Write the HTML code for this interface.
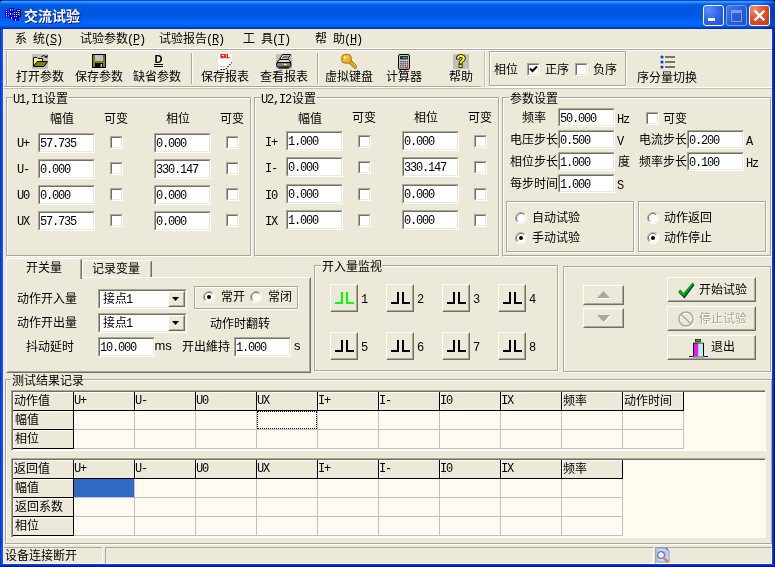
<!DOCTYPE html>
<html><head><meta charset="utf-8"><title>交流试验</title>
<style>
*{box-sizing:content-box;margin:0;padding:0}
html,body{width:775px;height:567px;overflow:hidden;background:#ECE9D8}
body{position:relative;font-family:"Liberation Sans","Noto Sans CJK SC",sans-serif;font-size:12px;line-height:18px;color:#000}
.ab,.t,.et,.ed,.bt,.gt,.r{position:absolute}
.t,.gt{white-space:nowrap;height:18px}
.a{font-family:"Liberation Mono","Noto Sans CJK SC",monospace;letter-spacing:-1.2px;margin-left:-1px;margin-right:1px}
.sp{display:inline-block;width:6px}
.et{border:1px solid #ACA899;box-shadow:1px 1px 0 #fff}
.et i{position:absolute;left:0;top:0;right:0;bottom:0;border-left:1px solid #fff;border-top:1px solid #fff}
.ed{background:#fff;overflow:hidden;border:1px solid;border-color:#ACA899 #fff #fff #ACA899}
.ed::before{content:"";position:absolute;left:0;top:0;right:0;bottom:0;border:1px solid;border-color:#716F64 #ECE9D8 #ECE9D8 #716F64}
.ed .v{position:absolute;left:2px;white-space:nowrap}
.bt{background:#ECE9D8;border:1px solid;border-color:#fff #716F64 #716F64 #fff}
.bt i{position:absolute;left:0;top:0;right:0;bottom:0;border:1px solid;border-color:#ECE9D8 #ACA899 #ACA899 #ECE9D8}
.gray{color:#ACA899;text-shadow:1px 1px 0 #fff}
.ss{font-family:"Liberation Sans",sans-serif;font-size:13px}
</style></head><body><div id="w" style="position:absolute;left:0;top:0;width:775px;height:567px;will-change:transform">

<div class="ab" style="left:0;top:0;width:775px;height:8px;background:#000"></div>
<div class="ab" style="left:0;top:8px;width:775px;height:559px;background:#0054E3"></div>
<div class="ab" style="left:3px;top:29px;width:769px;height:535px;background:#ECE9D8"></div>
<div class="ab" style="left:0;top:0;width:775px;height:29px;border-radius:4px 4px 0 0;background:linear-gradient(to bottom,#0047DC 0.5px,#3C96FF 1.5px,#2F8DFF 2.5px,#0B6EFA 3.5px,#0362EE 4.5px,#005CE6 5.5px,#0058E2 6.5px,#0058E2 7.5px,#0058E2 8.5px,#0058E2 9.5px,#0058E2 10.5px,#0058E2 11.5px,#0058E2 12.5px,#0058E2 13.5px,#0058E2 14.5px,#0058E2 15.5px,#0059E6 16.5px,#005AEA 17.5px,#005CEE 18.5px,#005EF2 19.5px,#0060F6 20.5px,#0264FC 21.5px,#0268FF 22.5px,#0268FF 23.5px,#0268FF 24.5px,#0062F4 25.5px,#0058E4 26.5px,#0044CC 27.5px,#0030B4 28.5px)"></div>
<div class="ab" style="left:760px;top:1px;width:15px;height:28px;background:linear-gradient(to right,rgba(0,20,120,0),rgba(0,20,120,.45))"></div>
<div class="t" style="left:24px;top:6px;font-size:14px;font-weight:bold;color:#fff;text-shadow:1px 1px 0 #0A1883;line-height:20px;height:20px">交流试验</div>
<svg class="ab" style="left:5px;top:8px" width="16" height="14" viewBox="0 0 16 14"><rect x="11" y="1" width="5" height="8" fill="#0000C8"/><rect x="15" y="1" width="1" height="8" fill="#000"/><rect x="12" y="2" width="3" height="1" fill="#A0A080"/><rect x="13" y="4" width="1" height="1" fill="#E0E000"/><rect x="13" y="6" width="1" height="1" fill="#E0E000"/><rect x="14" y="4" width="1" height="4" fill="#208080"/><rect x="0" y="2" width="4.5" height="7.5" fill="#0000FF"/><rect x="4" y="0" width="4.6" height="11" fill="#0000FF"/><rect x="8" y="0" width=".7" height="3" fill="#000060"/><rect x="8" y="3" width="5" height="10" fill="#0000FF"/><rect x="13" y="9" width="1" height="4" fill="#000"/><g fill="#FFFF00"><rect x="1" y="3" width="1" height="1"/><rect x="1" y="5" width="1" height="1"/><rect x="1" y="7" width="1" height="1.6"/><rect x="5" y="1" width="1" height="1.8"/><rect x="5" y="5" width="1" height="1.8"/><rect x="6" y="9" width="1" height="1.8"/><rect x="9" y="4" width="1" height="1"/><rect x="11" y="4" width="1" height="1"/><rect x="9" y="6" width="1" height="1"/><rect x="11" y="6" width="1" height="1"/><rect x="9" y="8" width="1" height="1"/><rect x="11" y="8" width="1" height="1"/><rect x="10" y="11" width="1" height="1.8"/></g><g fill="#909060"><rect x="3" y="3" width="1" height="1"/><rect x="3" y="5" width="1" height="1"/><rect x="3" y="7" width="1" height="1.6"/><rect x="7" y="1" width="1" height="1.8"/><rect x="7" y="5" width="1" height="1.8"/></g></svg>
<div class="ab" style="left:703px;top:5px;width:19px;height:19px;border:1px solid #fff;border-radius:3px;background:radial-gradient(circle at 25% 20%,#6090FA 0%,#2E64EC 50%,#2050D8 100%)"><div class="ab" style="left:4px;top:12px;width:7px;height:3px;background:#fff"></div></div>
<div class="ab" style="left:726px;top:5px;width:19px;height:19px;border:1px solid #7C9CE8;border-radius:3px;background:linear-gradient(135deg,#4A7DE8 0%,#2A5CD8 50%,#2453CC 100%)"><div class="ab" style="left:4px;top:4px;width:9px;height:8px;border:1px solid #7C9CE8;border-top:3px solid #7C9CE8"></div></div>
<div class="ab" style="left:749px;top:5px;width:19px;height:19px;border:1px solid #fff;border-radius:3px;background:radial-gradient(circle at 25% 20%,#F09478 0%,#E4532E 40%,#C63616 100%)"><svg class="ab" style="left:0;top:0" width="19" height="19" viewBox="0 0 19 19"><path d="M4.6 4.6 L14.4 14.4 M14.4 4.6 L4.6 14.4" stroke="#fff" stroke-width="2.4" stroke-linecap="butt"/></svg></div>
<div class="t" style="left:15px;top:30px">系<span class="sp"> </span>统<span class="a">(<u>S</u>)</span></div>
<div class="t" style="left:80px;top:30px">试验参数<span class="a">(<u>P</u>)</span></div>
<div class="t" style="left:159px;top:30px">试验报告<span class="a">(<u>R</u>)</span></div>
<div class="t" style="left:243px;top:30px">工<span class="sp"> </span>具<span class="a">(<u>T</u>)</span></div>
<div class="t" style="left:315px;top:30px">帮<span class="sp"> </span>助<span class="a">(<u>H</u>)</span></div>
<div class="ab" style="left:3px;top:48px;width:769px;height:1px;background:#fff"></div>
<div class="ab" style="left:3px;top:49px;width:769px;height:1px;background:#ACA899"></div>
<div class="ab" style="left:3px;top:50px;width:769px;height:1px;background:#fff"></div>
<div class="ab" style="left:3px;top:87px;width:769px;height:1px;background:#fff"></div>
<div class="ab" style="left:3px;top:88px;width:769px;height:1px;background:#C5C2B2"></div>
<div class="ab" style="left:6px;top:51px;width:1px;height:35px;background:#ACA899"></div>
<div class="ab" style="left:7px;top:51px;width:1px;height:35px;background:#fff"></div>
<svg class="ab" style="left:32px;top:54px" width="16" height="16" viewBox="0 0 16 16"><rect x="0" y="0" width="16" height="15" fill="#C0C0C0"/><path d="M1.5 12 V3.5 H5 L6 4.5 H10.5 V7.5" fill="#FFFF80" stroke="#000"/><path d="M2 11 L5 7 H10 V5 H6 L5 4 H2 Z" fill="#FFFF60"/><path d="M1.5 12.5 L5 7.5 H15.5 L12 12.5 Z" fill="#808000" stroke="#000"/><path d="M9.5 2.5 Q12 0 14.5 3.5" stroke="#000" fill="none"/><path d="M12.5 3.5 H15.5 V0.8 Z" fill="#000"/></svg>
<div class="t " style="left:16px;top:68px;">打开参数</div>
<svg class="ab" style="left:91px;top:54px" width="16" height="16" viewBox="0 0 16 16"><rect x="1.5" y="0.5" width="13" height="13" fill="#808000" stroke="#000"/><rect x="4" y="1" width="8" height="6" fill="#C0C0C0"/><rect x="4" y="9" width="8" height="5" fill="#000"/><rect x="9.5" y="10" width="1.5" height="3" fill="#C0C0C0"/><rect x="12.5" y="1.5" width="1" height="1" fill="#000"/></svg>
<div class="t " style="left:75px;top:68px;">保存参数</div>
<svg class="ab" style="left:149px;top:54px" width="16" height="16" viewBox="0 0 16 16"><text x="9.5" y="9.4" font-family="Liberation Sans,sans-serif" font-weight="bold" font-size="11" text-anchor="middle" fill="#000">D</text><rect x="5" y="10" width="9" height="1" fill="#000"/><rect x="5" y="12" width="9" height="1" fill="#000"/></svg>
<div class="t " style="left:133px;top:68px;">缺省参数</div>
<svg class="ab" style="left:217px;top:54px" width="16" height="16" viewBox="0 0 16 16"><path d="M2 0 H16 V8 Q15.5 12 10 16 H1 V1 Z" fill="#fff"/><path d="M14.5 0 H16 V8 L14.5 10 Z" fill="#E8E8E8"/><text x="8" y="4.2" font-size="4.6" font-family="Liberation Sans,sans-serif" font-weight="bold" fill="#F00000" text-anchor="middle" stroke="#F00000" stroke-width=".4">EXL</text><path d="M3.5 15.5 H8.5 L14.8 8.5" stroke="#000" stroke-width="1.1" stroke-dasharray="1.6 1.1" fill="none"/><path d="M3 12.5 H9" stroke="#C8C8C8"/></svg>
<div class="t " style="left:201px;top:68px;">保存报表</div>
<svg class="ab" style="left:276px;top:54px" width="16" height="16" viewBox="0 0 16 16"><rect x="0" y="0" width="16" height="15" fill="#C0C0C0"/><path d="M6.5 0.5 H14.5 L11.5 5.5 H3.5 Z" fill="#fff" stroke="#000"/><path d="M7 2.2 H12.5 M6 3.8 H11.5" stroke="#000" stroke-width=".8"/><path d="M1 8.5 L3.5 5.5 H12.5 L15 8.5 Z" fill="#D8D8D8" stroke="#000"/><rect x="0.5" y="8.5" width="14.5" height="4.5" rx="1.8" fill="#808080" stroke="#000"/><rect x="7.5" y="10" width="3.5" height="1" fill="#FFFF00"/><path d="M2.5 14 H13" stroke="#000" stroke-width="1.2"/></svg>
<div class="t " style="left:260px;top:68px;">查看报表</div>
<svg class="ab" style="left:341px;top:54px" width="16" height="16" viewBox="0 0 16 16"><path d="M6.5 7.5 L9.5 5.5 L15.3 11.5 L15.3 14.3 L13 14.3 L12.6 12.8 L11.2 12.6 L10.8 11 L9.4 10.8 Z" fill="#E8A818" stroke="#A87008" stroke-width=".8"/><rect x="0.8" y="0.5" width="9.4" height="8.6" rx="3" fill="#F0B828" stroke="#A87008"/><circle cx="4" cy="3.5" r="1.3" fill="#FFF4C0"/><path d="M2.5 6.5 L7.5 2" stroke="#F8D060" stroke-width="1"/></svg>
<div class="t " style="left:325px;top:68px;">虚拟键盘</div>
<svg class="ab" style="left:396px;top:54px" width="16" height="16" viewBox="0 0 16 16"><rect x="2.5" y="0.5" width="11" height="15" rx="1.5" fill="#C8C8C8" stroke="#000"/><rect x="4" y="2" width="8" height="3.5" fill="#303030"/><rect x="7.2" y="3" width="1.4" height="1.4" fill="#00E8E8"/><rect x="9.6" y="3" width="1.4" height="1.4" fill="#00E8E8"/><g fill="#404040"><rect x="4.2" y="7" width="1.3" height="1.3"/><rect x="6.4" y="7" width="1.3" height="1.3"/><rect x="8.6" y="7" width="1.3" height="1.3"/><rect x="10.8" y="7" width="1.3" height="1.3"/><rect x="4.2" y="9.1" width="1.3" height="1.3"/><rect x="6.4" y="9.1" width="1.3" height="1.3"/><rect x="8.6" y="9.1" width="1.3" height="1.3"/><rect x="10.8" y="9.1" width="1.3" height="1.3"/><rect x="4.2" y="11.2" width="1.3" height="1.3"/><rect x="6.4" y="11.2" width="1.3" height="1.3"/><rect x="8.6" y="11.2" width="1.3" height="1.3"/><rect x="10.8" y="11.2" width="1.3" height="1.3"/><rect x="4.2" y="13.2" width="1.3" height="1.3"/><rect x="6.4" y="13.2" width="1.3" height="1.3"/></g><rect x="8.6" y="13" width="3.5" height="1.4" fill="#F02020"/></svg>
<div class="t " style="left:386px;top:68px;">计算器</div>
<svg class="ab" style="left:453px;top:54px" width="16" height="16" viewBox="0 0 16 16"><rect x="0" y="0" width="16" height="15" fill="#C0C0C0"/><text x="8" y="13" font-family="Liberation Sans,sans-serif" font-weight="bold" font-size="16" text-anchor="middle" fill="#FFFF00" stroke="#000" stroke-width="1.6" paint-order="stroke">?</text></svg>
<div class="t " style="left:449px;top:68px;">帮助</div>
<div class="ab" style="left:191px;top:53px;width:1px;height:31px;background:#ACA899"></div>
<div class="ab" style="left:192px;top:53px;width:1px;height:31px;background:#fff"></div>
<div class="ab" style="left:317px;top:53px;width:1px;height:31px;background:#ACA899"></div>
<div class="ab" style="left:318px;top:53px;width:1px;height:31px;background:#fff"></div>
<div class="ab" style="left:484px;top:51px;width:1px;height:36px;background:#C5C2B2"></div>
<div class="ab" style="left:485px;top:51px;width:1px;height:36px;background:#fff"></div>
<div class="ab" style="left:3px;top:86px;width:478px;height:1px;background:#ACA899"></div>
<div class="et" style="left:489px;top:51px;width:135px;height:33px"><i></i></div>
<div class="t " style="left:494px;top:61px;">相位</div>
<div class="ed" style="left:527px;top:63px;width:11px;height:11px"><svg width="9" height="9" viewBox="0 0 9 9" style="position:absolute;left:1px;top:1px"><path d="M1 3.5 L3.5 6 L8 1.5" stroke="#000" stroke-width="2" fill="none"/></svg></div>
<div class="t " style="left:545px;top:61px;">正序</div>
<div class="ed" style="left:575px;top:63px;width:11px;height:11px"></div>
<div class="t " style="left:593px;top:61px;">负序</div>
<svg class="ab" style="left:660px;top:55px" width="16" height="14" viewBox="0 0 16 14"><g fill="#1040C0"><circle cx="2" cy="2" r="1.6"/><circle cx="2" cy="7" r="1.6"/><circle cx="2" cy="12" r="1.6"/></g><g fill="#000"><rect x="5" y="1.5" width="10" height="1"/><rect x="5" y="6.5" width="10" height="1"/><rect x="5" y="11.5" width="10" height="1"/></g></svg>
<div class="t " style="left:637px;top:69px;">序分量切换</div>
<div class="et" style="left:6px;top:97px;width:243px;height:157px"><i></i></div>
<div class="ab" style="left:13px;top:97px;width:55px;height:2px;background:#ECE9D8"></div>
<div class="t" style="left:14px;top:90px"><span class="a">U1,I1</span>设置</div>
<div class="t " style="left:50px;top:110px;">幅值</div>
<div class="t " style="left:104px;top:110px;">可变</div>
<div class="t " style="left:166px;top:110px;">相位</div>
<div class="t " style="left:220px;top:110px;">可变</div>
<div class="t " style="left:18px;top:134px;"><span class="a">U+</span></div>
<div class="ed" style="left:38px;top:133px;width:55px;height:18px"><span class="a v" style="top:1px">57.735</span></div>
<div class="ed" style="left:110px;top:136px;width:11px;height:11px"></div>
<div class="ed" style="left:154px;top:133px;width:55px;height:18px"><span class="a v" style="top:1px">0.000</span></div>
<div class="ed" style="left:226px;top:136px;width:11px;height:11px"></div>
<div class="t " style="left:18px;top:160px;"><span class="a">U-</span></div>
<div class="ed" style="left:38px;top:159px;width:55px;height:18px"><span class="a v" style="top:1px">0.000</span></div>
<div class="ed" style="left:110px;top:162px;width:11px;height:11px"></div>
<div class="ed" style="left:154px;top:159px;width:55px;height:18px"><span class="a v" style="top:1px">330.147</span></div>
<div class="ed" style="left:226px;top:162px;width:11px;height:11px"></div>
<div class="t " style="left:18px;top:186px;"><span class="a">U0</span></div>
<div class="ed" style="left:38px;top:185px;width:55px;height:18px"><span class="a v" style="top:1px">0.000</span></div>
<div class="ed" style="left:110px;top:188px;width:11px;height:11px"></div>
<div class="ed" style="left:154px;top:185px;width:55px;height:18px"><span class="a v" style="top:1px">0.000</span></div>
<div class="ed" style="left:226px;top:188px;width:11px;height:11px"></div>
<div class="t " style="left:18px;top:212px;"><span class="a">UX</span></div>
<div class="ed" style="left:38px;top:211px;width:55px;height:18px"><span class="a v" style="top:1px">57.735</span></div>
<div class="ed" style="left:110px;top:214px;width:11px;height:11px"></div>
<div class="ed" style="left:154px;top:211px;width:55px;height:18px"><span class="a v" style="top:1px">0.000</span></div>
<div class="ed" style="left:226px;top:214px;width:11px;height:11px"></div>
<div class="et" style="left:254px;top:97px;width:243px;height:157px"><i></i></div>
<div class="ab" style="left:261px;top:97px;width:55px;height:2px;background:#ECE9D8"></div>
<div class="t" style="left:262px;top:90px"><span class="a">U2,I2</span>设置</div>
<div class="t " style="left:298px;top:110px;">幅值</div>
<div class="t " style="left:352px;top:109px;">可变</div>
<div class="t " style="left:414px;top:109px;">相位</div>
<div class="t " style="left:468px;top:109px;">可变</div>
<div class="t " style="left:266px;top:133px;"><span class="a">I+</span></div>
<div class="ed" style="left:286px;top:131px;width:55px;height:18px"><span class="a v" style="top:1px">1.000</span></div>
<div class="ed" style="left:358px;top:135px;width:11px;height:11px"></div>
<div class="ed" style="left:402px;top:131px;width:55px;height:18px"><span class="a v" style="top:1px">0.000</span></div>
<div class="ed" style="left:474px;top:135px;width:11px;height:11px"></div>
<div class="t " style="left:266px;top:159px;"><span class="a">I-</span></div>
<div class="ed" style="left:286px;top:157px;width:55px;height:18px"><span class="a v" style="top:1px">0.000</span></div>
<div class="ed" style="left:358px;top:161px;width:11px;height:11px"></div>
<div class="ed" style="left:402px;top:157px;width:55px;height:18px"><span class="a v" style="top:1px">330.147</span></div>
<div class="ed" style="left:474px;top:161px;width:11px;height:11px"></div>
<div class="t " style="left:266px;top:186px;"><span class="a">I0</span></div>
<div class="ed" style="left:286px;top:184px;width:55px;height:18px"><span class="a v" style="top:1px">0.000</span></div>
<div class="ed" style="left:358px;top:188px;width:11px;height:11px"></div>
<div class="ed" style="left:402px;top:184px;width:55px;height:18px"><span class="a v" style="top:1px">0.000</span></div>
<div class="ed" style="left:474px;top:188px;width:11px;height:11px"></div>
<div class="t " style="left:266px;top:212px;"><span class="a">IX</span></div>
<div class="ed" style="left:286px;top:210px;width:55px;height:18px"><span class="a v" style="top:1px">1.000</span></div>
<div class="ed" style="left:358px;top:214px;width:11px;height:11px"></div>
<div class="ed" style="left:402px;top:210px;width:55px;height:18px"><span class="a v" style="top:1px">0.000</span></div>
<div class="ed" style="left:474px;top:214px;width:11px;height:11px"></div>
<div class="et" style="left:502px;top:97px;width:267px;height:157px"><i></i></div>
<div class="ab" style="left:509px;top:97px;width:49px;height:2px;background:#ECE9D8"></div>
<div class="t" style="left:510px;top:90px">参数设置</div>
<div class="t " style="left:522px;top:109px;">频率</div>
<div class="ed" style="left:558px;top:108px;width:55px;height:17px"><span class="a v" style="top:1px">50.000</span></div>
<div class="t " style="left:618px;top:110px;"><span class="a">Hz</span></div>
<div class="ed" style="left:646px;top:112px;width:11px;height:11px"></div>
<div class="t " style="left:663px;top:110px;">可变</div>
<div class="t " style="left:510px;top:131px;">电压步长</div>
<div class="ed" style="left:558px;top:130px;width:55px;height:17px"><span class="a v" style="top:1px">0.500</span></div>
<div class="t " style="left:618px;top:132px;"><span class="a">V</span></div>
<div class="t " style="left:639px;top:131px;">电流步长</div>
<div class="ed" style="left:687px;top:130px;width:55px;height:17px"><span class="a v" style="top:1px">0.200</span></div>
<div class="t " style="left:747px;top:132px;"><span class="a">A</span></div>
<div class="t " style="left:510px;top:153px;">相位步长</div>
<div class="ed" style="left:558px;top:152px;width:55px;height:17px"><span class="a v" style="top:1px">1.000</span></div>
<div class="t " style="left:618px;top:153px;">度</div>
<div class="t " style="left:639px;top:153px;">频率步长</div>
<div class="ed" style="left:687px;top:152px;width:55px;height:17px"><span class="a v" style="top:1px">0.100</span></div>
<div class="t " style="left:747px;top:154px;"><span class="a">Hz</span></div>
<div class="t " style="left:510px;top:175px;">每步时间</div>
<div class="ed" style="left:558px;top:174px;width:55px;height:17px"><span class="a v" style="top:1px">1.000</span></div>
<div class="t " style="left:618px;top:176px;"><span class="a">S</span></div>
<div class="et" style="left:506px;top:201px;width:126px;height:49px"><i></i></div>
<div class="et" style="left:638px;top:201px;width:126px;height:49px"><i></i></div>
<svg class="ab" style="left:515px;top:212px" width="12" height="12" viewBox="0 0 12 12"><circle cx="6" cy="6" r="5.5" fill="#fff"/><path d="M9.9 2.1 A5.5 5.5 0 0 0 2.1 9.9" stroke="#ACA899" stroke-width="1" fill="none"/><path d="M9.2 2.8 A4.5 4.5 0 0 0 2.8 9.2" stroke="#716F64" stroke-width="1" fill="none"/><path d="M2.1 9.9 A5.5 5.5 0 0 0 9.9 2.1" stroke="#fff" stroke-width="1" fill="none"/><path d="M2.8 9.2 A4.5 4.5 0 0 0 9.2 2.8" stroke="#F1EFE2" stroke-width="1" fill="none"/></svg>
<div class="t " style="left:532px;top:209px;">自动试验</div>
<svg class="ab" style="left:515px;top:232px" width="12" height="12" viewBox="0 0 12 12"><circle cx="6" cy="6" r="5.5" fill="#fff"/><path d="M9.9 2.1 A5.5 5.5 0 0 0 2.1 9.9" stroke="#ACA899" stroke-width="1" fill="none"/><path d="M9.2 2.8 A4.5 4.5 0 0 0 2.8 9.2" stroke="#716F64" stroke-width="1" fill="none"/><path d="M2.1 9.9 A5.5 5.5 0 0 0 9.9 2.1" stroke="#fff" stroke-width="1" fill="none"/><path d="M2.8 9.2 A4.5 4.5 0 0 0 9.2 2.8" stroke="#F1EFE2" stroke-width="1" fill="none"/><circle cx="6" cy="6" r="2" fill="#000"/></svg>
<div class="t " style="left:532px;top:229px;">手动试验</div>
<svg class="ab" style="left:647px;top:212px" width="12" height="12" viewBox="0 0 12 12"><circle cx="6" cy="6" r="5.5" fill="#fff"/><path d="M9.9 2.1 A5.5 5.5 0 0 0 2.1 9.9" stroke="#ACA899" stroke-width="1" fill="none"/><path d="M9.2 2.8 A4.5 4.5 0 0 0 2.8 9.2" stroke="#716F64" stroke-width="1" fill="none"/><path d="M2.1 9.9 A5.5 5.5 0 0 0 9.9 2.1" stroke="#fff" stroke-width="1" fill="none"/><path d="M2.8 9.2 A4.5 4.5 0 0 0 9.2 2.8" stroke="#F1EFE2" stroke-width="1" fill="none"/></svg>
<div class="t " style="left:664px;top:209px;">动作返回</div>
<svg class="ab" style="left:647px;top:232px" width="12" height="12" viewBox="0 0 12 12"><circle cx="6" cy="6" r="5.5" fill="#fff"/><path d="M9.9 2.1 A5.5 5.5 0 0 0 2.1 9.9" stroke="#ACA899" stroke-width="1" fill="none"/><path d="M9.2 2.8 A4.5 4.5 0 0 0 2.8 9.2" stroke="#716F64" stroke-width="1" fill="none"/><path d="M2.1 9.9 A5.5 5.5 0 0 0 9.9 2.1" stroke="#fff" stroke-width="1" fill="none"/><path d="M2.8 9.2 A4.5 4.5 0 0 0 9.2 2.8" stroke="#F1EFE2" stroke-width="1" fill="none"/><circle cx="6" cy="6" r="2" fill="#000"/></svg>
<div class="t " style="left:664px;top:229px;">动作停止</div>
<div class="ab" style="left:6px;top:277px;width:303px;height:94px;border:1px solid;border-color:#fff #716F64 #716F64 #fff;background:#ECE9D8"><div class="ab" style="left:0;top:0;right:0;bottom:0;border:1px solid;border-color:#ECE9D8 #ACA899 #ACA899 #ECE9D8"></div></div>
<div class="ab" style="left:6px;top:258px;width:74px;height:20px;background:#ECE9D8;border:1px solid;border-color:#fff #716F64 #ECE9D8 #fff;border-bottom:none;border-radius:3px 3px 0 0"><div class="ab" style="right:0;top:1px;width:1px;height:19px;background:#ACA899"></div></div>
<div class="ab" style="left:82px;top:260px;width:68px;height:16px;background:#ECE9D8;border:1px solid;border-color:#fff #716F64 #fff #fff;border-bottom:none;border-radius:2px 2px 0 0"><div class="ab" style="right:0;top:1px;width:1px;height:15px;background:#ACA899"></div></div>
<div class="t " style="left:26px;top:259px;">开关量</div>
<div class="t " style="left:92px;top:260px;">记录变量</div>
<div class="t " style="left:17px;top:290px;">动作开入量</div>
<div class="t " style="left:17px;top:314px;">动作开出量</div>
<div class="t " style="left:26px;top:338px;">抖动延时</div>
<div class="ed" style="left:98px;top:289px;width:87px;height:18px"><span class="ab" style="left:4px;top:0px;white-space:nowrap;z-index:1">接点<span class="a">1</span></span><div class="bt" style="right:1px;top:1px;width:15px;height:14px;z-index:1"><i></i><svg class="ab" style="left:3px;top:5px" width="7" height="4" viewBox="0 0 7 4"><path d="M0 0 H7 L3.5 4 Z" fill="#000"/></svg></div></div>
<div class="ed" style="left:98px;top:313px;width:87px;height:18px"><span class="ab" style="left:4px;top:0px;white-space:nowrap;z-index:1">接点<span class="a">1</span></span><div class="bt" style="right:1px;top:1px;width:15px;height:14px;z-index:1"><i></i><svg class="ab" style="left:3px;top:5px" width="7" height="4" viewBox="0 0 7 4"><path d="M0 0 H7 L3.5 4 Z" fill="#000"/></svg></div></div>
<div class="ed" style="left:98px;top:337px;width:55px;height:18px"><span class="a v" style="top:1px">10.000</span></div>
<div class="t ss" style="left:154.5px;top:337px">ms</div>
<div class="t " style="left:182px;top:338px;">开出維持</div>
<div class="ed" style="left:234px;top:337px;width:55px;height:18px"><span class="a v" style="top:1px">1.000</span></div>
<div class="t ss" style="left:294px;top:337px">s</div>
<div class="et" style="left:194px;top:286px;width:102px;height:21px"><i></i></div>
<svg class="ab" style="left:203px;top:291px" width="12" height="12" viewBox="0 0 12 12"><circle cx="6" cy="6" r="5.5" fill="#fff"/><path d="M9.9 2.1 A5.5 5.5 0 0 0 2.1 9.9" stroke="#ACA899" stroke-width="1" fill="none"/><path d="M9.2 2.8 A4.5 4.5 0 0 0 2.8 9.2" stroke="#716F64" stroke-width="1" fill="none"/><path d="M2.1 9.9 A5.5 5.5 0 0 0 9.9 2.1" stroke="#fff" stroke-width="1" fill="none"/><path d="M2.8 9.2 A4.5 4.5 0 0 0 9.2 2.8" stroke="#F1EFE2" stroke-width="1" fill="none"/><circle cx="6" cy="6" r="2" fill="#000"/></svg>
<div class="t " style="left:221px;top:288px;">常开</div>
<svg class="ab" style="left:250px;top:291px" width="12" height="12" viewBox="0 0 12 12"><circle cx="6" cy="6" r="5.5" fill="#fff"/><path d="M9.9 2.1 A5.5 5.5 0 0 0 2.1 9.9" stroke="#ACA899" stroke-width="1" fill="none"/><path d="M9.2 2.8 A4.5 4.5 0 0 0 2.8 9.2" stroke="#716F64" stroke-width="1" fill="none"/><path d="M2.1 9.9 A5.5 5.5 0 0 0 9.9 2.1" stroke="#fff" stroke-width="1" fill="none"/><path d="M2.8 9.2 A4.5 4.5 0 0 0 9.2 2.8" stroke="#F1EFE2" stroke-width="1" fill="none"/></svg>
<div class="t " style="left:268px;top:288px;">常闭</div>
<div class="t " style="left:210px;top:315px;">动作时翻转</div>
<div class="et" style="left:314px;top:265px;width:242px;height:104px"><i></i></div>
<div class="ab" style="left:321px;top:265px;width:61px;height:2px;background:#ECE9D8"></div>
<div class="t" style="left:322px;top:258px">开入量监视</div>
<div class="bt" style="left:330px;top:284px;width:26px;height:26px"><i></i><svg class="ab" style="left:4px;top:7px" width="19" height="12" viewBox="0 0 19 12"><path d="M0 10 H6 V0 H8 V12 H0 Z M11 0 H13 V10 H19 V12 H11 Z" fill="#00FF00"/></svg></div>
<div class="t " style="left:362px;top:290px;"><span class="a">1</span></div>
<div class="bt" style="left:386px;top:284px;width:26px;height:26px"><i></i><svg class="ab" style="left:4px;top:7px" width="19" height="12" viewBox="0 0 19 12"><path d="M0 10 H6 V0 H8 V12 H0 Z M11 0 H13 V10 H19 V12 H11 Z" fill="#000"/></svg></div>
<div class="t " style="left:418px;top:290px;"><span class="a">2</span></div>
<div class="bt" style="left:442px;top:284px;width:26px;height:26px"><i></i><svg class="ab" style="left:4px;top:7px" width="19" height="12" viewBox="0 0 19 12"><path d="M0 10 H6 V0 H8 V12 H0 Z M11 0 H13 V10 H19 V12 H11 Z" fill="#000"/></svg></div>
<div class="t " style="left:474px;top:290px;"><span class="a">3</span></div>
<div class="bt" style="left:498px;top:284px;width:26px;height:26px"><i></i><svg class="ab" style="left:4px;top:7px" width="19" height="12" viewBox="0 0 19 12"><path d="M0 10 H6 V0 H8 V12 H0 Z M11 0 H13 V10 H19 V12 H11 Z" fill="#000"/></svg></div>
<div class="t " style="left:530px;top:290px;"><span class="a">4</span></div>
<div class="bt" style="left:330px;top:332px;width:26px;height:26px"><i></i><svg class="ab" style="left:4px;top:7px" width="19" height="12" viewBox="0 0 19 12"><path d="M0 10 H6 V0 H8 V12 H0 Z M11 0 H13 V10 H19 V12 H11 Z" fill="#000"/></svg></div>
<div class="t " style="left:362px;top:338px;"><span class="a">5</span></div>
<div class="bt" style="left:386px;top:332px;width:26px;height:26px"><i></i><svg class="ab" style="left:4px;top:7px" width="19" height="12" viewBox="0 0 19 12"><path d="M0 10 H6 V0 H8 V12 H0 Z M11 0 H13 V10 H19 V12 H11 Z" fill="#000"/></svg></div>
<div class="t " style="left:418px;top:338px;"><span class="a">6</span></div>
<div class="bt" style="left:442px;top:332px;width:26px;height:26px"><i></i><svg class="ab" style="left:4px;top:7px" width="19" height="12" viewBox="0 0 19 12"><path d="M0 10 H6 V0 H8 V12 H0 Z M11 0 H13 V10 H19 V12 H11 Z" fill="#000"/></svg></div>
<div class="t " style="left:474px;top:338px;"><span class="a">7</span></div>
<div class="bt" style="left:498px;top:332px;width:26px;height:26px"><i></i><svg class="ab" style="left:4px;top:7px" width="19" height="12" viewBox="0 0 19 12"><path d="M0 10 H6 V0 H8 V12 H0 Z M11 0 H13 V10 H19 V12 H11 Z" fill="#000"/></svg></div>
<div class="t " style="left:530px;top:338px;"><span class="a">8</span></div>
<div class="et" style="left:563px;top:266px;width:206px;height:104px"><i></i></div>
<div class="bt" style="left:583px;top:285px;width:39px;height:18px"><i></i><svg class="ab" style="left:13px;top:5px" width="14" height="8" viewBox="0 0 14 8"><path d="M1 8 H14 L7.5 1 Z" fill="#fff"/><path d="M0 7 H13 L6.5 0 Z" fill="#ACA899"/></svg></div>
<div class="bt" style="left:583px;top:308px;width:39px;height:18px"><i></i><svg class="ab" style="left:13px;top:6px" width="14" height="8" viewBox="0 0 14 8"><path d="M1 1 H14 L7.5 8 Z" fill="#fff"/><path d="M0 0 H13 L6.5 7 Z" fill="#ACA899"/></svg></div>
<div class="bt" style="left:667px;top:277px;width:87px;height:23px"><i></i><svg class="ab" style="left:9px;top:4px" width="18" height="17" viewBox="0 0 18 17"><path d="M1.5 10.5 L4 8.5 L7 12 L15.5 1.5 L17.5 3 L7.5 16.5 Z" fill="#102080"/><path d="M1 9.5 L3.5 7.5 L6.5 11 L15.5 0.5 L17 1.5 L7 15 Z" fill="#00A800"/></svg></div>
<div class="t " style="left:699px;top:281px;">开始试验</div>
<div class="bt" style="left:667px;top:306px;width:87px;height:23px"><i></i><svg class="ab" style="left:10px;top:4px" width="18" height="18" viewBox="0 0 18 18"><circle cx="9" cy="9" r="7" fill="none" stroke="#fff" stroke-width="1.5"/><path d="M4.5 4.5 L14.5 14.5" stroke="#fff" stroke-width="1.5"/><circle cx="8" cy="8" r="7" fill="none" stroke="#ACA899" stroke-width="1.5"/><path d="M3.2 3.2 L12.8 12.8" stroke="#ACA899" stroke-width="1.5"/></svg></div>
<div class="t gray" style="left:699px;top:310px;">停止试验</div>
<div class="bt" style="left:667px;top:335px;width:87px;height:23px"><i></i><svg class="ab" style="left:21px;top:3px" width="20" height="20" viewBox="0 0 20 20"><rect x="6.5" y="0.5" width="5" height="2" fill="#00D000" stroke="#000" stroke-width=".7"/><rect x="5" y="4" width="4.5" height="13.5" fill="#E818E8"/><rect x="9.5" y="4" width="5" height="13.5" fill="#B0F4F4"/><path d="M4.5 4 V17.5 M14.5 4 V17.5" stroke="#000"/><path d="M4.5 4 H14.5" stroke="#000" stroke-width=".8"/><path d="M0 17.5 H4 M15 17.5 H19" stroke="#0000A0" stroke-width="1.2"/><path d="M4 18 H15" stroke="#606060"/></svg></div>
<div class="t " style="left:711px;top:338px;">退出</div>
<div class="et" style="left:5px;top:379px;width:765px;height:163px"><i></i></div>
<div class="ab" style="left:11px;top:379px;width:73px;height:2px;background:#ECE9D8"></div>
<div class="t" style="left:12px;top:372px">测试结果记录</div>
<div class="ab" style="left:11px;top:390px;width:753px;height:59px;background:#FFFBF0;border:1px solid;border-color:#ACA899 #fff #fff #ACA899"></div>
<div class="ab" style="left:12px;top:391px;width:752px;height:58px;border-left:1px solid #716F64;border-top:1px solid #716F64"></div>
<div class="ab" style="left:74px;top:411px;width:60px;height:18px;border-right:1px solid #C0C0C0;border-bottom:1px solid #C0C0C0;background:transparent"></div>
<div class="ab" style="left:135px;top:411px;width:60px;height:18px;border-right:1px solid #C0C0C0;border-bottom:1px solid #C0C0C0;background:transparent"></div>
<div class="ab" style="left:196px;top:411px;width:60px;height:18px;border-right:1px solid #C0C0C0;border-bottom:1px solid #C0C0C0;background:transparent"></div>
<div class="ab" style="left:257px;top:411px;width:60px;height:18px;border-right:1px solid #C0C0C0;border-bottom:1px solid #C0C0C0;background:transparent"></div>
<div class="ab" style="left:257px;top:411px;width:58px;height:16px;border:1px dotted #000"></div>
<div class="ab" style="left:318px;top:411px;width:60px;height:18px;border-right:1px solid #C0C0C0;border-bottom:1px solid #C0C0C0;background:transparent"></div>
<div class="ab" style="left:379px;top:411px;width:60px;height:18px;border-right:1px solid #C0C0C0;border-bottom:1px solid #C0C0C0;background:transparent"></div>
<div class="ab" style="left:440px;top:411px;width:60px;height:18px;border-right:1px solid #C0C0C0;border-bottom:1px solid #C0C0C0;background:transparent"></div>
<div class="ab" style="left:501px;top:411px;width:60px;height:18px;border-right:1px solid #C0C0C0;border-bottom:1px solid #C0C0C0;background:transparent"></div>
<div class="ab" style="left:562px;top:411px;width:60px;height:18px;border-right:1px solid #C0C0C0;border-bottom:1px solid #C0C0C0;background:transparent"></div>
<div class="ab" style="left:623px;top:411px;width:60px;height:18px;border-right:1px solid #C0C0C0;border-bottom:1px solid #C0C0C0;background:transparent"></div>
<div class="ab" style="left:74px;top:430px;width:60px;height:18px;border-right:1px solid #C0C0C0;border-bottom:1px solid #C0C0C0;background:transparent"></div>
<div class="ab" style="left:135px;top:430px;width:60px;height:18px;border-right:1px solid #C0C0C0;border-bottom:1px solid #C0C0C0;background:transparent"></div>
<div class="ab" style="left:196px;top:430px;width:60px;height:18px;border-right:1px solid #C0C0C0;border-bottom:1px solid #C0C0C0;background:transparent"></div>
<div class="ab" style="left:257px;top:430px;width:60px;height:18px;border-right:1px solid #C0C0C0;border-bottom:1px solid #C0C0C0;background:transparent"></div>
<div class="ab" style="left:318px;top:430px;width:60px;height:18px;border-right:1px solid #C0C0C0;border-bottom:1px solid #C0C0C0;background:transparent"></div>
<div class="ab" style="left:379px;top:430px;width:60px;height:18px;border-right:1px solid #C0C0C0;border-bottom:1px solid #C0C0C0;background:transparent"></div>
<div class="ab" style="left:440px;top:430px;width:60px;height:18px;border-right:1px solid #C0C0C0;border-bottom:1px solid #C0C0C0;background:transparent"></div>
<div class="ab" style="left:501px;top:430px;width:60px;height:18px;border-right:1px solid #C0C0C0;border-bottom:1px solid #C0C0C0;background:transparent"></div>
<div class="ab" style="left:562px;top:430px;width:60px;height:18px;border-right:1px solid #C0C0C0;border-bottom:1px solid #C0C0C0;background:transparent"></div>
<div class="ab" style="left:623px;top:430px;width:60px;height:18px;border-right:1px solid #C0C0C0;border-bottom:1px solid #C0C0C0;background:transparent"></div>
<div class="ab" style="left:13px;top:392px;width:60px;height:18px;background:#ECE9D8;border-right:1px solid #000;border-bottom:1px solid #000;box-shadow:inset 1px 1px 0 #fff"></div>
<div class="t " style="left:14px;top:392px;">动作值</div>
<div class="ab" style="left:74px;top:392px;width:60px;height:18px;background:#ECE9D8;border-right:1px solid #000;border-bottom:1px solid #000;box-shadow:inset 1px 1px 0 #fff"></div>
<div class="t " style="left:75px;top:391px;"><span class="a">U+</span></div>
<div class="ab" style="left:135px;top:392px;width:60px;height:18px;background:#ECE9D8;border-right:1px solid #000;border-bottom:1px solid #000;box-shadow:inset 1px 1px 0 #fff"></div>
<div class="t " style="left:136px;top:391px;"><span class="a">U-</span></div>
<div class="ab" style="left:196px;top:392px;width:60px;height:18px;background:#ECE9D8;border-right:1px solid #000;border-bottom:1px solid #000;box-shadow:inset 1px 1px 0 #fff"></div>
<div class="t " style="left:197px;top:391px;"><span class="a">U0</span></div>
<div class="ab" style="left:257px;top:392px;width:60px;height:18px;background:#ECE9D8;border-right:1px solid #000;border-bottom:1px solid #000;box-shadow:inset 1px 1px 0 #fff"></div>
<div class="t " style="left:258px;top:391px;"><span class="a">UX</span></div>
<div class="ab" style="left:318px;top:392px;width:60px;height:18px;background:#ECE9D8;border-right:1px solid #000;border-bottom:1px solid #000;box-shadow:inset 1px 1px 0 #fff"></div>
<div class="t " style="left:319px;top:391px;"><span class="a">I+</span></div>
<div class="ab" style="left:379px;top:392px;width:60px;height:18px;background:#ECE9D8;border-right:1px solid #000;border-bottom:1px solid #000;box-shadow:inset 1px 1px 0 #fff"></div>
<div class="t " style="left:380px;top:391px;"><span class="a">I-</span></div>
<div class="ab" style="left:440px;top:392px;width:60px;height:18px;background:#ECE9D8;border-right:1px solid #000;border-bottom:1px solid #000;box-shadow:inset 1px 1px 0 #fff"></div>
<div class="t " style="left:441px;top:391px;"><span class="a">I0</span></div>
<div class="ab" style="left:501px;top:392px;width:60px;height:18px;background:#ECE9D8;border-right:1px solid #000;border-bottom:1px solid #000;box-shadow:inset 1px 1px 0 #fff"></div>
<div class="t " style="left:502px;top:391px;"><span class="a">IX</span></div>
<div class="ab" style="left:562px;top:392px;width:60px;height:18px;background:#ECE9D8;border-right:1px solid #000;border-bottom:1px solid #000;box-shadow:inset 1px 1px 0 #fff"></div>
<div class="t " style="left:563px;top:392px;">频率</div>
<div class="ab" style="left:623px;top:392px;width:60px;height:18px;background:#ECE9D8;border-right:1px solid #000;border-bottom:1px solid #000;box-shadow:inset 1px 1px 0 #fff"></div>
<div class="t " style="left:624px;top:392px;">动作时间</div>
<div class="ab" style="left:13px;top:411px;width:60px;height:18px;background:#ECE9D8;border-right:1px solid #000;border-bottom:1px solid #000;box-shadow:inset 1px 1px 0 #fff"></div>
<div class="t " style="left:15px;top:411px;">幅值</div>
<div class="ab" style="left:13px;top:430px;width:60px;height:18px;background:#ECE9D8;border-right:1px solid #000;border-bottom:1px solid #000;box-shadow:inset 1px 1px 0 #fff"></div>
<div class="t " style="left:15px;top:430px;">相位</div>
<div class="ab" style="left:11px;top:458px;width:753px;height:78px;background:#FFFBF0;border:1px solid;border-color:#ACA899 #fff #fff #ACA899"></div>
<div class="ab" style="left:12px;top:459px;width:752px;height:77px;border-left:1px solid #716F64;border-top:1px solid #716F64"></div>
<div class="ab" style="left:74px;top:479px;width:60px;height:18px;border-right:1px solid #C0C0C0;border-bottom:1px solid #C0C0C0;background:#316AC5"></div>
<div class="ab" style="left:135px;top:479px;width:60px;height:18px;border-right:1px solid #C0C0C0;border-bottom:1px solid #C0C0C0;background:transparent"></div>
<div class="ab" style="left:196px;top:479px;width:60px;height:18px;border-right:1px solid #C0C0C0;border-bottom:1px solid #C0C0C0;background:transparent"></div>
<div class="ab" style="left:257px;top:479px;width:60px;height:18px;border-right:1px solid #C0C0C0;border-bottom:1px solid #C0C0C0;background:transparent"></div>
<div class="ab" style="left:318px;top:479px;width:60px;height:18px;border-right:1px solid #C0C0C0;border-bottom:1px solid #C0C0C0;background:transparent"></div>
<div class="ab" style="left:379px;top:479px;width:60px;height:18px;border-right:1px solid #C0C0C0;border-bottom:1px solid #C0C0C0;background:transparent"></div>
<div class="ab" style="left:440px;top:479px;width:60px;height:18px;border-right:1px solid #C0C0C0;border-bottom:1px solid #C0C0C0;background:transparent"></div>
<div class="ab" style="left:501px;top:479px;width:60px;height:18px;border-right:1px solid #C0C0C0;border-bottom:1px solid #C0C0C0;background:transparent"></div>
<div class="ab" style="left:562px;top:479px;width:60px;height:18px;border-right:1px solid #C0C0C0;border-bottom:1px solid #C0C0C0;background:transparent"></div>
<div class="ab" style="left:74px;top:498px;width:60px;height:18px;border-right:1px solid #C0C0C0;border-bottom:1px solid #C0C0C0;background:transparent"></div>
<div class="ab" style="left:135px;top:498px;width:60px;height:18px;border-right:1px solid #C0C0C0;border-bottom:1px solid #C0C0C0;background:transparent"></div>
<div class="ab" style="left:196px;top:498px;width:60px;height:18px;border-right:1px solid #C0C0C0;border-bottom:1px solid #C0C0C0;background:transparent"></div>
<div class="ab" style="left:257px;top:498px;width:60px;height:18px;border-right:1px solid #C0C0C0;border-bottom:1px solid #C0C0C0;background:transparent"></div>
<div class="ab" style="left:318px;top:498px;width:60px;height:18px;border-right:1px solid #C0C0C0;border-bottom:1px solid #C0C0C0;background:transparent"></div>
<div class="ab" style="left:379px;top:498px;width:60px;height:18px;border-right:1px solid #C0C0C0;border-bottom:1px solid #C0C0C0;background:transparent"></div>
<div class="ab" style="left:440px;top:498px;width:60px;height:18px;border-right:1px solid #C0C0C0;border-bottom:1px solid #C0C0C0;background:transparent"></div>
<div class="ab" style="left:501px;top:498px;width:60px;height:18px;border-right:1px solid #C0C0C0;border-bottom:1px solid #C0C0C0;background:transparent"></div>
<div class="ab" style="left:562px;top:498px;width:60px;height:18px;border-right:1px solid #C0C0C0;border-bottom:1px solid #C0C0C0;background:transparent"></div>
<div class="ab" style="left:74px;top:517px;width:60px;height:18px;border-right:1px solid #C0C0C0;border-bottom:1px solid #C0C0C0;background:transparent"></div>
<div class="ab" style="left:135px;top:517px;width:60px;height:18px;border-right:1px solid #C0C0C0;border-bottom:1px solid #C0C0C0;background:transparent"></div>
<div class="ab" style="left:196px;top:517px;width:60px;height:18px;border-right:1px solid #C0C0C0;border-bottom:1px solid #C0C0C0;background:transparent"></div>
<div class="ab" style="left:257px;top:517px;width:60px;height:18px;border-right:1px solid #C0C0C0;border-bottom:1px solid #C0C0C0;background:transparent"></div>
<div class="ab" style="left:318px;top:517px;width:60px;height:18px;border-right:1px solid #C0C0C0;border-bottom:1px solid #C0C0C0;background:transparent"></div>
<div class="ab" style="left:379px;top:517px;width:60px;height:18px;border-right:1px solid #C0C0C0;border-bottom:1px solid #C0C0C0;background:transparent"></div>
<div class="ab" style="left:440px;top:517px;width:60px;height:18px;border-right:1px solid #C0C0C0;border-bottom:1px solid #C0C0C0;background:transparent"></div>
<div class="ab" style="left:501px;top:517px;width:60px;height:18px;border-right:1px solid #C0C0C0;border-bottom:1px solid #C0C0C0;background:transparent"></div>
<div class="ab" style="left:562px;top:517px;width:60px;height:18px;border-right:1px solid #C0C0C0;border-bottom:1px solid #C0C0C0;background:transparent"></div>
<div class="ab" style="left:13px;top:460px;width:60px;height:18px;background:#ECE9D8;border-right:1px solid #000;border-bottom:1px solid #000;box-shadow:inset 1px 1px 0 #fff"></div>
<div class="t " style="left:14px;top:460px;">返回值</div>
<div class="ab" style="left:74px;top:460px;width:60px;height:18px;background:#ECE9D8;border-right:1px solid #000;border-bottom:1px solid #000;box-shadow:inset 1px 1px 0 #fff"></div>
<div class="t " style="left:75px;top:459px;"><span class="a">U+</span></div>
<div class="ab" style="left:135px;top:460px;width:60px;height:18px;background:#ECE9D8;border-right:1px solid #000;border-bottom:1px solid #000;box-shadow:inset 1px 1px 0 #fff"></div>
<div class="t " style="left:136px;top:459px;"><span class="a">U-</span></div>
<div class="ab" style="left:196px;top:460px;width:60px;height:18px;background:#ECE9D8;border-right:1px solid #000;border-bottom:1px solid #000;box-shadow:inset 1px 1px 0 #fff"></div>
<div class="t " style="left:197px;top:459px;"><span class="a">U0</span></div>
<div class="ab" style="left:257px;top:460px;width:60px;height:18px;background:#ECE9D8;border-right:1px solid #000;border-bottom:1px solid #000;box-shadow:inset 1px 1px 0 #fff"></div>
<div class="t " style="left:258px;top:459px;"><span class="a">UX</span></div>
<div class="ab" style="left:318px;top:460px;width:60px;height:18px;background:#ECE9D8;border-right:1px solid #000;border-bottom:1px solid #000;box-shadow:inset 1px 1px 0 #fff"></div>
<div class="t " style="left:319px;top:459px;"><span class="a">I+</span></div>
<div class="ab" style="left:379px;top:460px;width:60px;height:18px;background:#ECE9D8;border-right:1px solid #000;border-bottom:1px solid #000;box-shadow:inset 1px 1px 0 #fff"></div>
<div class="t " style="left:380px;top:459px;"><span class="a">I-</span></div>
<div class="ab" style="left:440px;top:460px;width:60px;height:18px;background:#ECE9D8;border-right:1px solid #000;border-bottom:1px solid #000;box-shadow:inset 1px 1px 0 #fff"></div>
<div class="t " style="left:441px;top:459px;"><span class="a">I0</span></div>
<div class="ab" style="left:501px;top:460px;width:60px;height:18px;background:#ECE9D8;border-right:1px solid #000;border-bottom:1px solid #000;box-shadow:inset 1px 1px 0 #fff"></div>
<div class="t " style="left:502px;top:459px;"><span class="a">IX</span></div>
<div class="ab" style="left:562px;top:460px;width:60px;height:18px;background:#ECE9D8;border-right:1px solid #000;border-bottom:1px solid #000;box-shadow:inset 1px 1px 0 #fff"></div>
<div class="t " style="left:563px;top:460px;">频率</div>
<div class="ab" style="left:13px;top:479px;width:60px;height:18px;background:#ECE9D8;border-right:1px solid #000;border-bottom:1px solid #000;box-shadow:inset 1px 1px 0 #fff"></div>
<div class="t " style="left:15px;top:479px;">幅值</div>
<div class="ab" style="left:13px;top:498px;width:60px;height:18px;background:#ECE9D8;border-right:1px solid #000;border-bottom:1px solid #000;box-shadow:inset 1px 1px 0 #fff"></div>
<div class="t " style="left:15px;top:498px;">返回系数</div>
<div class="ab" style="left:13px;top:517px;width:60px;height:18px;background:#ECE9D8;border-right:1px solid #000;border-bottom:1px solid #000;box-shadow:inset 1px 1px 0 #fff"></div>
<div class="t " style="left:15px;top:517px;">相位</div>
<div class="ab" style="left:3px;top:547px;width:98px;height:15px;border:1px solid;border-color:#ACA899 #fff #fff #ECE9D8"></div>
<div class="ab" style="left:105px;top:547px;width:547px;height:15px;border:1px solid;border-color:#ACA899 #fff #fff #ACA899"></div>
<div class="ab" style="left:655px;top:547px;width:115px;height:15px;border:1px solid;border-color:#ACA899 #fff #fff #ACA899"></div>
<div class="t " style="left:5px;top:547px;">设备连接断开</div>
<svg class="ab" style="left:656px;top:547px" width="14" height="16" viewBox="0 0 14 16"><path d="M1 1 H10 L13 4 V15 H1 Z" fill="#C8D8F8" stroke="#7088C0" stroke-width=".8"/><path d="M4 5 H11 M4 7 H11 M4 9 H11" stroke="#90A8E0" stroke-width=".8"/><circle cx="5" cy="8" r="3.4" fill="#E8F4FF" stroke="#6080B0" stroke-width="1.2"/><path d="M7.5 10.5 L12 15" stroke="#E08030" stroke-width="2.2"/><path d="M10 1 L12 3" stroke="#E020A0" stroke-width="1.2"/></svg>
<div class="ab" style="left:3px;top:29px;width:1px;height:535px;background:#F6F0DE"></div>
<div class="ab" style="left:771px;top:29px;width:1px;height:19px;background:#F6F0DE"></div>
<div class="ab" style="left:0px;top:29px;width:1px;height:538px;background:#0831D9"></div>
<div class="ab" style="left:1px;top:29px;width:1px;height:538px;background:#0A4FE6"></div>
<div class="ab" style="left:2px;top:29px;width:1px;height:538px;background:#0C5CEC"></div>
<div class="ab" style="left:772px;top:29px;width:1px;height:538px;background:#0042DC"></div>
<div class="ab" style="left:773px;top:29px;width:1px;height:538px;background:#0030BC"></div>
<div class="ab" style="left:774px;top:29px;width:1px;height:538px;background:#001590"></div>
<div class="ab" style="left:0;top:564px;width:775px;height:1px;background:#0042DC"></div>
<div class="ab" style="left:0;top:565px;width:775px;height:1px;background:#0030BC"></div>
<div class="ab" style="left:0;top:566px;width:775px;height:1px;background:#001590"></div>
</div></body></html>
